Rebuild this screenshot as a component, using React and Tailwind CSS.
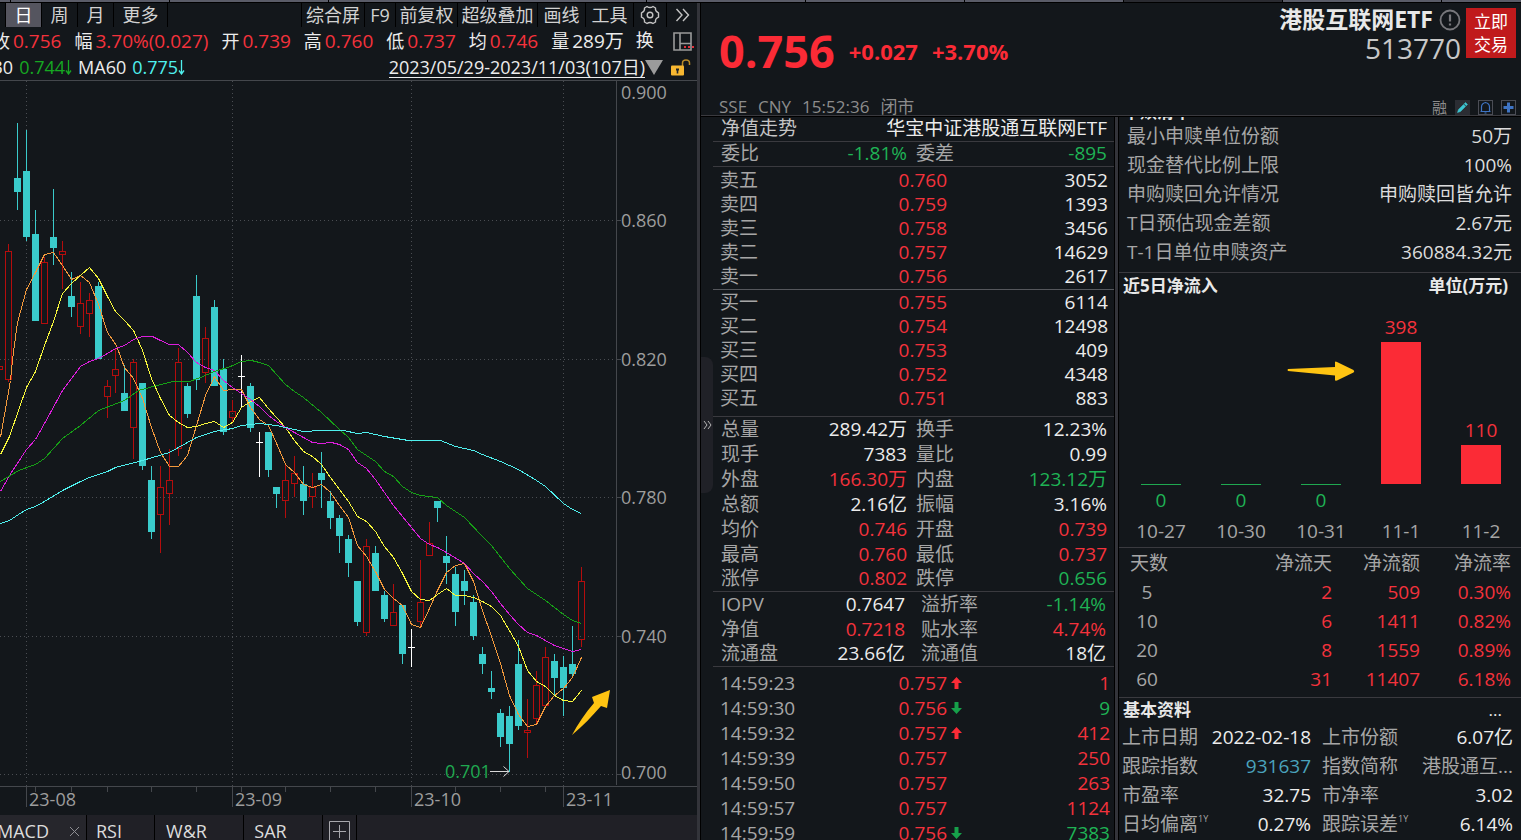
import React from "react";

const RED = "text-[#f4323c]";
const GREEN = "text-[#1fb355]";
const WHITE = "text-[#ececec]";
const GREY = "text-[#a6a6a6]";

/* x, kind (c = falling, r = rising, w = flat), high, body top, body bottom, low */
const CANDLES = [
  [-1, "r", 366, 366, 369, 369],
  [8, "r", 244, 251, 379, 382],
  [17, "c", 123, 178, 192, 210],
  [26, "c", 130, 171, 237, 241],
  [35, "c", 210, 234, 321, 321],
  [44, "r", 257, 262, 323, 323],
  [53, "c", 189, 237, 248, 265],
  [62, "r", 241, 251, 254, 289],
  [71, "c", 272, 296, 307, 317],
  [80, "r", 282, 303, 326, 334],
  [89, "r", 293, 300, 313, 337],
  [98, "c", 282, 286, 359, 359],
  [107, "r", 380, 386, 396, 418],
  [115, "r", 348, 369, 375, 393],
  [124, "c", 365, 393, 411, 411],
  [133, "r", 359, 362, 427, 459],
  [142, "c", 383, 383, 466, 470],
  [151, "c", 466, 480, 532, 539],
  [160, "r", 466, 487, 514, 553],
  [169, "r", 449, 480, 493, 525],
  [178, "r", 348, 362, 448, 456],
  [187, "c", 383, 386, 414, 418],
  [196, "c", 275, 296, 380, 390],
  [205, "r", 327, 338, 372, 383],
  [214, "c", 300, 307, 386, 386],
  [223, "c", 359, 369, 432, 435],
  [232, "r", 400, 411, 417, 422],
  [241, "w", 355, 376, 376, 408],
  [250, "c", 383, 386, 428, 432],
  [259, "w", 432, 442, 442, 477],
  [268, "c", 432, 432, 470, 477],
  [276, "c", 487, 487, 494, 508],
  [285, "r", 464, 480, 500, 518],
  [294, "r", 456, 473, 483, 497],
  [303, "c", 466, 484, 501, 515],
  [312, "r", 473, 487, 496, 508],
  [321, "c", 452, 473, 480, 508],
  [330, "c", 491, 501, 518, 529],
  [339, "c", 515, 518, 536, 553],
  [348, "c", 535, 539, 563, 577],
  [357, "c", 581, 581, 622, 626],
  [366, "r", 539, 546, 632, 636],
  [375, "c", 546, 553, 591, 591],
  [384, "c", 591, 595, 619, 622],
  [393, "r", 584, 612, 625, 625],
  [402, "c", 605, 605, 654, 664],
  [411, "w", 629, 647, 647, 667],
  [420, "r", 560, 602, 621, 626],
  [429, "r", 522, 543, 555, 555],
  [437, "c", 501, 501, 508, 522],
  [446, "c", 536, 556, 563, 584],
  [455, "c", 567, 574, 612, 626],
  [464, "c", 570, 581, 591, 605],
  [473, "c", 595, 602, 636, 640],
  [482, "c", 647, 654, 664, 674],
  [491, "c", 671, 688, 692, 699],
  [500, "c", 709, 713, 737, 747],
  [509, "c", 706, 716, 744, 772],
  [518, "c", 640, 664, 726, 730],
  [527, "r", 699, 730, 732, 758],
  [536, "r", 671, 685, 718, 725],
  [545, "r", 647, 657, 705, 705],
  [554, "c", 654, 661, 678, 695],
  [563, "c", 656, 667, 688, 716],
  [572, "c", 626, 664, 674, 678],
  [581, "r", 567, 581, 639, 647],
];

const MA_LINES = [
  ["#f2993c", "0,437 10,380 12,359 17,322 26,289 35,272 44,254 53,252 62,265 71,279 80,275 89,282 98,304 107,332 116,345 124,367 133,378 142,398 151,427 160,452 169,466 178,466 187,455 196,425 205,395 214,376 223,390 232,389 241,389 250,407 259,419 268,425 277,445 285,464 294,472 303,484 312,487 321,484 330,492 339,505 348,517 357,545 366,556 375,571 384,589 393,598 402,605 411,624 420,627 429,608 437,590 446,572 455,565 464,563 473,581 482,610 491,636 500,663 509,695 518,714 527,726 536,724 545,706 554,695 563,688 572,677 581,657"],
  ["#f7f73c", "0,454 9,436 18,410 26,387 35,371 44,345 53,321 62,293 71,283 80,275 89,267 98,278 107,296 115,311 124,320 133,330 139,343 142,350 151,378 160,398 169,415 178,422 187,427 196,426 205,423 214,421 223,427 232,422 241,407 250,401 259,397 268,408 276,417 285,427 294,440 303,451 312,456 321,464 330,477 339,489 348,501 357,516 366,521 375,531 384,546 393,557 402,573 411,591 420,599 429,600 437,594 446,588 455,595 464,595 473,597 482,601 491,606 500,615 509,630 518,646 527,670 536,681 545,686 554,695 563,700 572,701 581,690"],
  ["#dc1edc", "0,491 9,475 26,449 35,439 44,423 62,390 80,366 89,361 98,358 107,353 115,348 124,345 133,339 142,336 152,336 160,340 169,344 178,344 187,352 196,362 205,367 214,370 223,380 232,387 241,393 250,399 259,406 268,415 276,421 285,427 303,437 312,442 321,443 331,442 339,444 348,449 357,462 366,468 375,479 384,492 393,505 411,527 420,538 429,544 437,547 446,552 464,563 473,573 482,581 491,591 500,603 509,614 518,624 527,632 536,635 543,639 554,645 563,648 572,651 581,649"],
  ["#16a016", "0,481 18,470 35,464 44,458 62,438 80,425 98,410 124,400 138,390 160,384 173,381 189,381 200,377 214,371 230,366 241,361 251,360 259,362 268,365 285,384 294,391 303,397 321,412 339,429 348,437 357,449 366,455 375,461 384,471 393,476 402,486 411,492 420,495 437,497 446,505 464,517 482,536 491,545 509,568 527,588 545,600 563,614 572,620 581,623"],
  ["#4ff0ee", "0,523 9,520 18,514 26,509 35,506 44,501 62,490 80,481 89,477 107,471 115,467 142,460 169,452 178,447 196,437 214,431 232,428 241,425 259,423 276,425 303,431 321,430 343,430 357,433 366,432 384,436 408,440 440,440 455,446 473,450 482,454 500,461 518,469 536,480 545,486 563,503 572,509 581,513"],
];

function Candle({ c }) {
  const [x, kind, high, top, bottom, low] = c;
  if (kind === "c") {
    return (
      <g fill="#3acbcb">
        <rect x={x} y={high} width="1" height={low - high} />
        <rect x={x - 3} y={top} width="7" height={bottom - top} />
      </g>
    );
  }
  if (kind === "w") {
    return (
      <g fill="#ffffff">
        <rect x={x} y={high} width="1" height={low - high} />
        <rect x={x - 3} y={top} width="7" height="1" />
      </g>
    );
  }
  return (
    <g fill="#b40d0d">
      <rect x={x} y={high} width="1" height={top - high} />
      <rect x={x} y={bottom} width="1" height={low - bottom} />
      <rect x={x - 2.5} y={top + 0.5} width="6" height={bottom - top} fill="none" stroke="#b40d0d" />
    </g>
  );
}

function PriceChart() {
  return (
    <svg viewBox="0 80 697 735" className="block w-full" role="img" aria-label="日K线" shapeRendering="crispEdges">
      <g stroke="#4a4d52" strokeDasharray="1 3">
        {[220, 359, 497, 636, 774].map((y) => (
          <line key={y} x1="0" x2="616" y1={y + 0.5} y2={y + 0.5} />
        ))}
        {[26, 232, 411, 563].map((x) => (
          <line key={x} x1={x + 0.5} x2={x + 0.5} y1="81" y2="786" />
        ))}
      </g>
      <g fill="#44474c">
        <rect x="0" y="80" width="697" height="1" />
        <rect x="0" y="786" width="697" height="1" />
        <rect x="616" y="80" width="1" height="705" />
        {[26, 232, 411, 563].map((x) => (
          <rect key={x} x={x} y="787" width="1" height="20" />
        ))}
        {[35, 71, 107, 151, 196, 241, 285, 330, 375, 455, 500, 545].map((x) => (
          <rect key={x} x={x} y="787" width="1" height="5" />
        ))}
        {[220, 359, 497, 636, 774].map((y) => (
          <rect key={y} x="617" y={y} width="4" height="1" />
        ))}
      </g>
      {CANDLES.map((c) => (
        <Candle key={c[0]} c={c} />
      ))}
      <g fill="none" transform="translate(0.5 0.5)">
        {MA_LINES.map(([color, points]) => (
          <polyline key={color} points={points} stroke={color} />
        ))}
      </g>
      <g fill="#9d9d9d" fontSize="18">
        <text x="621" y="99">0.900</text>
        <text x="621" y="227">0.860</text>
        <text x="621" y="366">0.820</text>
        <text x="621" y="504">0.780</text>
        <text x="621" y="643">0.740</text>
        <text x="621" y="779">0.700</text>
        <text x="29" y="806">23-08</text>
        <text x="235" y="806">23-09</text>
        <text x="414" y="806">23-10</text>
        <text x="566" y="806">23-11</text>
      </g>
      <text x="445" y="778" fontSize="18" fill="#1fa850">0.701</text>
      <g shapeRendering="auto">
        <path d="M490 771.5H509M503.500 766.500L509 771.500L503.500 776.500" fill="none" stroke="#d8d8d8" />
        <path d="M572 735C578 724 585 713 594 703L592 697L610 690L607 708L601 706C592 716 583 726 572 735Z" fill="#ffc412" />
      </g>
    </svg>
  );
}

function ToolButton({ children, className = "", ...rest }) {
  return (
    <button type="button" className={`flex h-6 items-center justify-center border-r border-black ${className}`} {...rest}>
      {children}
    </button>
  );
}

function Quote({ label, value, color }) {
  return (
    <div className="flex items-center gap-[3px] text-[18px]">
      <span className={WHITE}>{label}</span>
      <span className={`text-[19px] ${color}`}>{value}</span>
    </div>
  );
}

function DownMark() {
  return (
    <svg width="7" height="15" viewBox="0 0 7 15" fill="none" stroke="currentColor" aria-hidden="true">
      <path d="M3.500 0V14M1 10.500L3.500 14L6 10.500" strokeWidth="1.300" />
    </svg>
  );
}

function ChartPanel() {
  return (
    <section className="flex min-w-0 flex-1 flex-col overflow-hidden">
      <nav className="flex h-[25px] shrink-0 items-start justify-between text-[18px] text-[#d2d2d2]">
        <div className="flex pl-[5px]">
          <ToolButton className="w-[37px] border-l bg-[#55555f] text-white" aria-pressed="true">日</ToolButton>
          <ToolButton className="w-9">周</ToolButton>
          <ToolButton className="w-9">月</ToolButton>
          <ToolButton className="w-[54px]">更多</ToolButton>
        </div>
        <div className="flex">
          <ToolButton className="w-16 border-l">综合屏</ToolButton>
          <ToolButton className="w-[31px]">F9</ToolButton>
          <ToolButton className="w-[62px]">前复权</ToolButton>
          <ToolButton className="w-20">超级叠加</ToolButton>
          <ToolButton className="w-12">画线</ToolButton>
          <ToolButton className="w-12">工具</ToolButton>
          <ToolButton className="w-[33px]" aria-label="设置">
            <svg width="20" height="20" viewBox="0 0 20 20" fill="none" stroke="#c4c4c4" strokeWidth="1.400" strokeLinejoin="round">
              <path d="M7 1.500Q10 3.600 13 1.500L15.500 3Q15 6.400 18.500 7.800V12.200Q15 13.600 15.500 17L13 18.500Q10 16.400 7 18.500L4.500 17Q5 13.600 1.500 12.200V7.800Q5 6.400 4.500 3Z" />
              <circle cx="10" cy="10" r="2.800" />
            </svg>
          </ToolButton>
          <button type="button" aria-label="展开" className="flex h-6 w-[30px] items-center justify-center">
            <svg width="15" height="14" viewBox="0 0 15 14" fill="none" stroke="#c4c4c4" strokeWidth="1.400">
              <path d="M1.500 1L7 7L1.500 13M8 1L13.500 7L8 13" />
            </svg>
          </button>
        </div>
      </nav>

      <div className="flex h-[27px] shrink-0 items-center justify-between pr-[2px]">
        <div className="-ml-2 flex gap-[13px] whitespace-nowrap">
          <Quote label="收" value="0.756" color={RED} />
          <Quote label="幅" value="3.70%(0.027)" color={RED} />
          <Quote label="开" value="0.739" color={RED} />
          <Quote label="高" value="0.760" color={RED} />
          <Quote label="低" value="0.737" color={RED} />
          <Quote label="均" value="0.746" color={RED} />
          <Quote label="量" value="289万" color={WHITE} />
          <span className={`-ml-px text-[18px] ${WHITE}`}>换</span>
        </div>
        <button type="button" aria-label="面板布局">
          <svg width="22" height="19" viewBox="0 0 22 19" fill="none" stroke="#9b9b9b" strokeWidth="1.600">
            <path d="M1 1H18V18H1ZM7 1V18M7 11.500H18" />
            <path d="M11 15H13M15 15H17M19 15H21" stroke="#e4303a" strokeWidth="2" />
          </svg>
        </button>
      </div>

      <div className="flex h-[25px] shrink-0 items-center justify-between pr-[6px] text-[18px]">
        <div className="-ml-[35px] flex items-center gap-[6px] whitespace-nowrap">
          <span className={WHITE}>MA30</span>
          <span className="flex items-center text-[#16a822]">0.744<DownMark /></span>
          <span className={WHITE}>MA60</span>
          <span className="flex items-center text-[#4ff0ee]">0.775<DownMark /></span>
        </div>
        <div className="flex items-center">
          <button type="button" className={`h-[20px] border-b border-current ${WHITE}`}>
            <span className="block leading-[18px]">2023/05/29-2023/11/03(107日)</span>
          </button>
          <svg width="18" height="15" viewBox="0 0 18 15" aria-hidden="true">
            <path d="M0 0H18L9 15Z" fill="#9b9b9b" />
          </svg>
          <button type="button" aria-label="解锁" className="ml-2">
            <svg width="20" height="17" viewBox="0 0 20 17" fill="none">
              <path d="M11.500 7V4Q11.500 1 15 1Q18.500 1 18.500 4V6" stroke="#b98a28" strokeWidth="1.500" />
              <rect x="0" y="6.500" width="13" height="10" rx="1" fill="#f7b731" />
              <path d="M5 9.500H8V11.500H7.300V14.500H5.700V11.500H5Z" fill="#20242a" />
            </svg>
          </button>
        </div>
      </div>

      <div className="min-h-0 flex-1 overflow-hidden">
        <PriceChart />
      </div>

      <nav className="flex h-[25px] shrink-0 overflow-hidden bg-[#202026] text-[18px] leading-[32px] text-[#dcdcdc]">
        <button type="button" aria-pressed="true" className="-ml-[3px] flex h-8 w-[90px] items-center gap-[20px] border-r border-black bg-[#26262c]">
          MACD
          <svg width="11" height="11" viewBox="0 0 11 11" stroke="#8e8e93" aria-hidden="true">
            <path d="M1 1L10 10M10 1L1 10" />
          </svg>
        </button>
        <button type="button" className="h-8 w-[68px] border-r border-black pr-[23px]">RSI</button>
        <button type="button" className="h-8 w-[89px] border-r border-black pr-[25px]">W&amp;R</button>
        <button type="button" className="h-8 w-[79px] border-r border-black pr-[25px]">SAR</button>
        <button type="button" aria-label="添加指标" className="flex h-8 w-[34px] justify-center border-r border-black pt-[6px]">
          <svg width="21" height="21" viewBox="0 0 21 21" fill="none" stroke="#a8a8ad">
            <path d="M0.500 0.500H20.500V20.500H0.500ZM10.500 4V17M4 10.500H17" />
          </svg>
        </button>
      </nav>
    </section>
  );
}

function SecurityHeader() {
  return (
    <header className="flex h-[113px] shrink-0 justify-between overflow-hidden border-b border-[#3a3a3f] pl-[18px] pr-[5px]">
      <div className="flex flex-col justify-between">
        <div className="flex items-center gap-[14px] pt-5 font-bold text-[#fb2b36]">
          <span className="text-[45px] leading-[56px]">0.756</span>
          <span className="text-[22px]">+0.027</span>
          <span className="text-[22px]">+3.70%</span>
        </div>
        <div className="flex gap-[11px] text-[17px] leading-[17px] text-[#8c8c8c]">
          <span>SSE</span>
          <span>CNY</span>
          <span>15:52:36</span>
          <span>闭市</span>
        </div>
      </div>
      <div className="flex flex-col items-end justify-between pt-[5px]">
        <div className="flex gap-[5px]">
          <div className="flex flex-col items-end">
            <div className="flex items-center gap-[6px]">
              <h1 className="text-[23px] font-bold leading-[23px] text-[#e8e8e8]">港股互联网ETF</h1>
              <button type="button" aria-label="提示">
                <svg width="22" height="22" viewBox="0 0 22 22" fill="none" stroke="#77777b" strokeWidth="1.800">
                  <circle cx="11" cy="11" r="9.500" />
                  <path d="M11 5.500V12.500M11 14.500V16.500" strokeWidth="2.200" />
                </svg>
              </button>
            </div>
            <span className="text-[28px] leading-[34px] text-[#c8c8c8]">513770</span>
          </div>
          <button type="button" className="h-[50px] w-[50px] bg-[#c01a1c] text-[17px] leading-[23px] text-white">
            立即<br />交易
          </button>
        </div>
        <div className="flex items-center gap-2 text-[15px] leading-[15px] text-[#8c8c8c]">
          <span>融</span>
          <button type="button" aria-label="编辑">
            <svg width="15" height="15" viewBox="0 0 15 15">
              <rect width="15" height="15" fill="#2b2d33" />
              <path d="M2.500 12.500L3.500 9.500L8.500 4.500L10.500 6.500L5.500 11.500ZM9.200 3.800L10.500 2.500L12.500 4.500L11.200 5.800Z" fill="#3cc6d2" stroke="#3cc6d2" strokeWidth="0.500" />
            </svg>
          </button>
          <button type="button" aria-label="提醒">
            <svg width="15" height="15" viewBox="0 0 15 15" fill="none">
              <rect x="0.500" y="0.500" width="14" height="14" stroke="#4b4d55" />
              <path d="M2.500 11.500H12.500M3.500 11.500V7Q3.500 3.500 7.500 2.500Q11.500 3.500 11.500 7V11.500M6.500 13H8.500" stroke="#3f74c4" strokeWidth="1.200" />
            </svg>
          </button>
          <button type="button" aria-label="加自选">
            <svg width="15" height="15" viewBox="0 0 15 15" fill="none">
              <rect x="0.500" y="0.500" width="14" height="14" stroke="#4b4d55" />
              <path d="M7.500 2.500V12.500M2.500 7.500H12.500" stroke="#3f74c4" strokeWidth="3" />
            </svg>
          </button>
        </div>
      </div>
    </header>
  );
}

function Book({ rows }) {
  return (
    <table className="w-full table-fixed">
      <tbody>
        {rows.map(([label, price, volume]) => (
          <tr key={label} className="h-6">
            <th scope="row" className={`w-[60px] p-0 text-left font-normal ${GREY}`}>{label}</th>
            <td className={`p-0 text-right ${RED}`}>
              <span className="pr-[99px]">{price}</span>
            </td>
            <td className={`w-[62px] p-0 text-right ${WHITE}`}>{volume}</td>
          </tr>
        ))}
      </tbody>
    </table>
  );
}

function PairRows({ rows, first = "w-[186px]", gap = "gap-[9px]", pad = "pr-[7px]" }) {
  return (
    <dl className={`border-b border-[#3a3a3f] pl-2 ${pad}`}>
      {rows.map(([a, av, ac, b, bv, bc]) => (
        <div key={a} className={`flex h-[25px] items-center pb-[2px] last:h-6 ${gap}`}>
          <div className={`flex shrink-0 justify-between ${first}`}>
            <dt className={GREY}>{a}</dt>
            <dd className={ac}>{av}</dd>
          </div>
          <div className="flex flex-1 justify-between">
            <dt className={GREY}>{b}</dt>
            <dd className={bc}>{bv}</dd>
          </div>
        </div>
      ))}
    </dl>
  );
}

const ASKS = [["卖五", "0.760", "3052"], ["卖四", "0.759", "1393"], ["卖三", "0.758", "3456"], ["卖二", "0.757", "14629"], ["卖一", "0.756", "2617"]];
const BIDS = [["买一", "0.755", "6114"], ["买二", "0.754", "12498"], ["买三", "0.753", "409"], ["买四", "0.752", "4348"], ["买五", "0.751", "883"]];

const STATS = [
  ["总量", "289.42万", WHITE, "换手", "12.23%", WHITE],
  ["现手", "7383", WHITE, "量比", "0.99", WHITE],
  ["外盘", "166.30万", RED, "内盘", "123.12万", GREEN],
  ["总额", "2.16亿", WHITE, "振幅", "3.16%", WHITE],
  ["均价", "0.746", RED, "开盘", "0.739", RED],
  ["最高", "0.760", RED, "最低", "0.737", RED],
  ["涨停", "0.802", RED, "跌停", "0.656", GREEN],
];

const FUND = [
  ["IOPV", "0.7647", WHITE, "溢折率", "-1.14%", GREEN],
  ["净值", "0.7218", RED, "贴水率", "4.74%", RED],
  ["流通盘", "23.66亿", WHITE, "流通值", "18亿", WHITE],
];

const TRADES = [
  ["14:59:23", "0.757", "up", "1", RED],
  ["14:59:30", "0.756", "down", "9", GREEN],
  ["14:59:32", "0.757", "up", "412", RED],
  ["14:59:39", "0.757", "", "250", RED],
  ["14:59:50", "0.757", "", "263", RED],
  ["14:59:57", "0.757", "", "1124", RED],
  ["14:59:59", "0.756", "down", "7383", GREEN],
];

function TickArrow({ dir }) {
  if (!dir) return <span className="w-[11px]" />;
  return (
    <svg width="11" height="12" viewBox="0 0 11 12" aria-hidden="true">
      {dir === "up" ? (
        <path d="M5.500 0L11 6H7.500V12H3.500V6H0Z" fill="#fb2b36" />
      ) : (
        <path d="M5.500 12L11 6H7.500V0H3.500V6H0Z" fill="#16a04a" />
      )}
    </svg>
  );
}

function OrderPanel() {
  return (
    <section className="flex w-[401px] shrink-0 flex-col overflow-hidden">
      <div className="flex h-[25px] shrink-0 items-center justify-between border-b border-[#3a3a3f] pb-[2px] pl-2 pr-[7px]">
        <span className="text-[#c4c4c4]">净值走势</span>
        <span className={WHITE}>华宝中证港股通互联网ETF</span>
      </div>
      <PairRows rows={[["委比", "-1.81%", GREEN, "委差", "-895", GREEN]]} />
      <div className="border-b border-[#55575c] pb-px pl-[7px] pr-[6px] pt-px">
        <Book rows={ASKS} />
      </div>
      <div className="border-b border-[#3a3a3f] pb-[6px] pl-[7px] pr-[6px]">
        <Book rows={BIDS} />
      </div>
      <PairRows rows={STATS} />
      <PairRows rows={FUND} first="w-[184px]" gap="gap-[16px]" pad="pr-[8px]" />
      <table className="mt-[3px] w-full table-fixed">
        <tbody>
          {TRADES.map(([time, price, dir, volume, color]) => (
            <tr key={time} className="h-[25px]">
              <td className={`w-[150px] p-0 pl-[7px] ${GREY}`}>{time}</td>
              <td className={`p-0 ${RED}`}>
                <span className="flex items-center justify-end gap-1">
                  {price}
                  <TickArrow dir={dir} />
                </span>
              </td>
              <td className={`w-[152px] p-0 pr-1 text-right ${color}`}>{volume}</td>
            </tr>
          ))}
        </tbody>
      </table>
    </section>
  );
}

const RULES = [
  ["最小申赎单位份额", "50万"],
  ["现金替代比例上限", "100%"],
  ["申购赎回允许情况", "申购赎回皆允许"],
  ["T日预估现金差额", "2.67元"],
  ["T-1日单位申赎资产", "360884.32元"],
];

const FLOWS = [["10-27", 0], ["10-30", 0], ["10-31", 0], ["11-1", 398], ["11-2", 110]];

const FLOW_TABLE = [["5", "2", "509", "0.30%"], ["10", "6", "1411", "0.82%"], ["20", "8", "1559", "0.89%"], ["60", "31", "11407", "6.18%"]];

const LINK = "text-[#4aa3bd]";
const PROFILE = [
  ["上市日期", "", "2022-02-18", WHITE, "上市份额", "", "6.07亿", WHITE],
  ["跟踪指数", "", "931637", LINK, "指数简称", "", "港股通互...", GREY],
  ["市盈率", "", "32.75", WHITE, "市净率", "", "3.02", WHITE],
  ["日均偏离", "1Y", "0.27%", WHITE, "跟踪误差", "1Y", "6.14%", WHITE],
];

function Label({ text, sup }) {
  return (
    <dt className={`flex ${GREY}`}>
      {text}
      {sup && <span className="text-[9px] leading-[14px]">{sup}</span>}
    </dt>
  );
}

function InfoPanel() {
  return (
    <section className="flex min-w-0 flex-1 flex-col overflow-hidden">
      <div className="flex h-[5px] shrink-0 items-end overflow-hidden pl-1">
        <h2 className="text-[17px] font-bold leading-[21px] text-[#e8e8e8]">申赎清单</h2>
      </div>
      <dl className="shrink-0 border-b border-[#3a3a3f] pb-[5px] pl-2 pr-[9px]">
        {RULES.map(([k, v]) => (
          <div key={k} className="flex h-[29px] items-center justify-between pb-px">
            <dt className={GREY}>{k}</dt>
            <dd className="text-[#dcdcdc]">{v}</dd>
          </div>
        ))}
      </dl>

      <div className="flex h-[25px] shrink-0 items-center justify-between pl-1 pr-[13px] text-[17px] font-bold text-[#e8e8e8]">
        <h2>近5日净流入</h2>
        <span>单位(万元)</span>
      </div>
      <div className="relative grid h-[250px] shrink-0 grid-cols-5 border-b border-[#3a3a3f] pl-[2px]">
        {FLOWS.map(([day, v]) => (
          <div key={day} className="flex flex-col items-center">
            <div className="flex h-[187px] flex-col items-center justify-end">
              {v > 0 && (
                <>
                  <span className={`mb-[2px] leading-[26px] ${RED}`}>{v}</span>
                  <div className="mb-px w-10 bg-[#fb2b36]" style={{ height: Math.round(v * 0.357) }} />
                </>
              )}
              {v === 0 && <div className="h-px w-10 bg-[#1fa850]" />}
            </div>
            <span className={`h-[31px] leading-[31px] ${GREEN}`}>{v === 0 ? "0" : ""}</span>
            <span className={`leading-[31px] ${GREY}`}>{day}</span>
          </div>
        ))}
        <svg className="absolute left-[168px] top-[63px]" width="68" height="20" viewBox="0 0 68 20" aria-hidden="true">
          <path d="M1 8Q0 9 1 10L48 14.500V19Q48 20 50 19.500L66.500 11.500Q68 10.500 66.500 9L50 1Q48 0 48 1.500V6Z" fill="#ffc412" />
        </svg>
      </div>

      <div className="shrink-0 border-b border-[#3a3a3f] pb-1">
        <table className="w-full table-fixed">
          <thead>
            <tr className={`h-[29px] ${GREY}`}>
              <th className="p-0 pl-[11px] text-left font-normal">天数</th>
              <th className="w-20 p-0 text-right font-normal">净流天</th>
              <th className="w-[88px] p-0 text-right font-normal">净流额</th>
              <th className="w-[101px] p-0 pr-[10px] text-right font-normal">净流率</th>
            </tr>
          </thead>
          <tbody>
            {FLOW_TABLE.map(([d, a, b, c]) => (
              <tr key={d} className={`h-[29px] ${RED}`}>
                <td className={`p-0 ${GREY}`}>
                  <span className="block w-[56px] text-center">{d}</span>
                </td>
                <td className="p-0 text-right">{a}</td>
                <td className="p-0 text-right">{b}</td>
                <td className="p-0 pr-[10px] text-right">{c}</td>
              </tr>
            ))}
          </tbody>
        </table>
      </div>

      <div className="flex h-6 shrink-0 items-center justify-between pl-1 pr-[19px] text-[17px] text-[#e8e8e8]">
        <h2 className="font-bold">基本资料</h2>
        <button type="button" className="leading-[14px]">...</button>
      </div>
      <dl className="shrink-0 pl-[3px] pr-2">
        {PROFILE.map(([a, as, av, ac, b, bs, bv, bc]) => (
          <div key={a} className="flex h-[29px] items-center gap-[11px] whitespace-nowrap">
            <div className="flex w-[189px] shrink-0 justify-between">
              <Label text={a} sup={as} />
              <dd className={ac}>{av}</dd>
            </div>
            <div className="flex flex-1 justify-between">
              <Label text={b} sup={bs} />
              <dd className={bc}>{bv}</dd>
            </div>
          </div>
        ))}
      </dl>
    </section>
  );
}

export default function App() {
  return (
    <div className="flex h-screen flex-col overflow-hidden bg-[#13171b] font-['Open_Sans','Noto_Sans_CJK_SC',sans-serif]">
      <div className="flex h-[3px] shrink-0 overflow-hidden border-b border-black">
        <div className="w-[11px] shrink-0 border-r border-black bg-[#5a5c68]" />
        {Array.from({ length: 16 }, (_, i) => (
          <div key={i} className={`w-[159px] shrink-0 border-r border-black ${i === 7 ? "bg-[#2a2b31]" : "bg-[#5a5c68]"}`} />
        ))}
      </div>
      <main className="flex min-h-0 flex-1">
        <ChartPanel />
        <div className="w-1 shrink-0 border-r border-black bg-[#33343a]" />
        <div className="flex w-[820px] shrink-0 flex-col">
          <SecurityHeader />
          <div className="flex min-h-0 flex-1 border-t border-black text-[19px] leading-[24px]">
            <div className="flex w-3 shrink-0 flex-col pt-[240px]">
              <button type="button" aria-label="收起" className="flex h-[136px] w-3 items-center justify-center rounded-r-lg bg-[#202127]">
                <svg width="9" height="10" viewBox="0 0 9 10" fill="none" stroke="#b4b4b4">
                  <path d="M1 1L4 5L1 9M5 1L8 5L5 9" />
                </svg>
              </button>
            </div>
            <OrderPanel />
            <div className="w-[5px] shrink-0 border-x border-black bg-[#33343a]" />
            <InfoPanel />
          </div>
        </div>
      </main>
    </div>
  );
}
